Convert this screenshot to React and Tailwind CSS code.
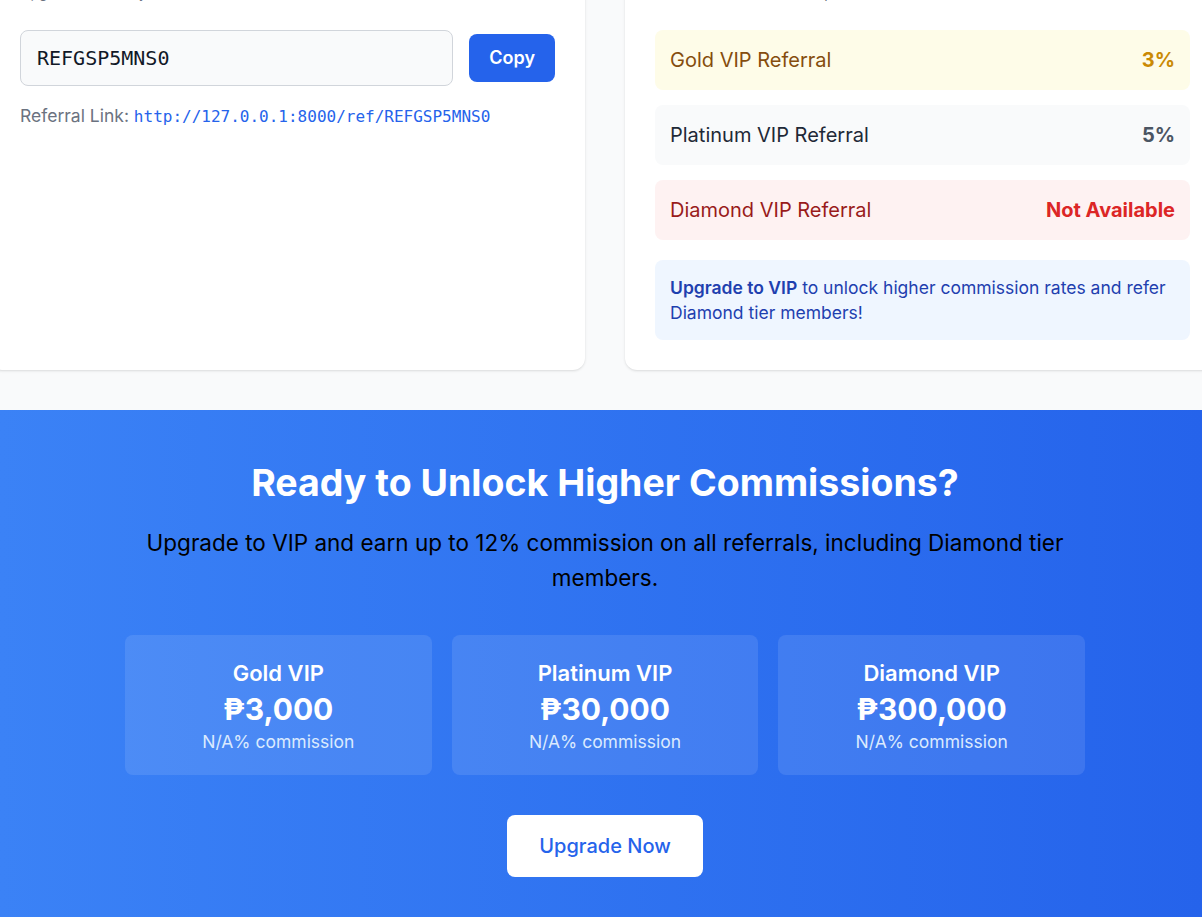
const rates = [
  {
    label: 'Gold VIP Referral',
    value: '3%',
    row: 'bg-[#fefce8]',
    text: 'text-[#854d0e]',
    val: 'text-[#ca8a04]',
  },
  {
    label: 'Platinum VIP Referral',
    value: '5%',
    row: 'bg-[#f9fafb]',
    text: 'text-[#1f2937]',
    val: 'text-[#4b5563]',
  },
  {
    label: 'Diamond VIP Referral',
    value: 'Not Available',
    row: 'bg-[#fef2f2]',
    text: 'text-[#991b1b]',
    val: 'text-[#dc2626]',
  },
]

const tiers = [
  { name: 'Gold VIP', price: '₱3,000' },
  { name: 'Platinum VIP', price: '₱30,000' },
  { name: 'Diamond VIP', price: '₱300,000' },
]

export default function App() {
  return (
    <div className="min-h-screen bg-[#f9fafb] font-['Inter','Noto_Sans',sans-serif]">
      <div className="overflow-hidden pb-10">
        <div className="-mt-[47px] -ml-[10px] grid w-[1230px] grid-cols-2 gap-10">
          {/* referral code card */}
          <div className="rounded-xl bg-white p-[30px] shadow">
            <p className="mb-[27px] text-sm leading-5 text-[#6b7280]">Upgrade to share your code</p>
            <div className="flex items-center gap-4">
              <div className="flex h-14 flex-1 items-center rounded-lg border border-[#d1d5db] bg-[#f9fafb] px-4 font-['DejaVu_Sans_Mono',monospace] text-xl text-[#111827]">
                REFGSP5MNS0
              </div>
              <button className="rounded-lg bg-[#2563eb] px-5 py-2.5 text-lg font-semibold text-white">
                Copy
              </button>
            </div>
            <p className="mt-[19px] text-[17.5px] leading-5 text-[#6b7280]">
              Referral Link:{' '}
              <span className="font-['DejaVu_Sans_Mono',monospace] text-base text-[#2563eb]">
                http://127.0.0.1:8000/ref/REFGSP5MNS0
              </span>
            </p>
          </div>

          {/* commission rates card */}
          <div className="rounded-xl bg-white p-[30px] shadow">
            <p className="mb-[27px] text-sm leading-5 text-[#374151]">Your current commission per referral</p>
            <div className="space-y-[15px]">
              {rates.map((r) => (
                <div
                  key={r.label}
                  className={`flex h-[60px] items-center justify-between rounded-lg px-[15px] text-[20px] ${r.row}`}
                >
                  <span className={r.text}>{r.label}</span>
                  <span className={`font-bold ${r.val}`}>{r.value}</span>
                </div>
              ))}
            </div>
            <div className="mt-5 rounded-lg bg-[#eff6ff] p-[15px] text-[17.5px] leading-[25px] text-[#1e40af]">
              <span className="font-semibold">Upgrade to VIP</span> to unlock higher commission rates and refer
              Diamond tier members!
            </div>
          </div>
        </div>
      </div>

      {/* upgrade banner */}
      <div className="bg-gradient-to-r from-[#3b82f6] to-[#2563eb] pb-16 pl-2 pt-[53px] text-center">
        <div className="mx-auto max-w-[960px]">
          <h2 className="text-[37.5px] leading-10 font-bold text-white">Ready to Unlock Higher Commissions?</h2>
          <p className="mt-[22px] text-[22.5px] leading-[35px] text-black">
            Upgrade to VIP and earn up to 12% commission on all referrals, including Diamond tier members.
          </p>
          <div className="mt-10 grid grid-cols-3 gap-5">
            {tiers.map((t) => (
              <div key={t.name} className="rounded-lg bg-white/10 px-6 pb-[21px] pt-6">
                <h3 className="mb-1 text-[22px] leading-7 font-semibold text-white">{t.name}</h3>
                <p className="text-3xl font-bold text-white">{t.price}</p>
                <p className="mt-[3px] text-[17.5px] leading-6 text-[#dbeafe]">N/A% commission</p>
              </div>
            ))}
          </div>
          <button className="mt-10 rounded-lg bg-white px-8 py-[17px] text-xl leading-7 font-medium text-[#2563eb]">
            Upgrade Now
          </button>
        </div>
      </div>
    </div>
  )
}
